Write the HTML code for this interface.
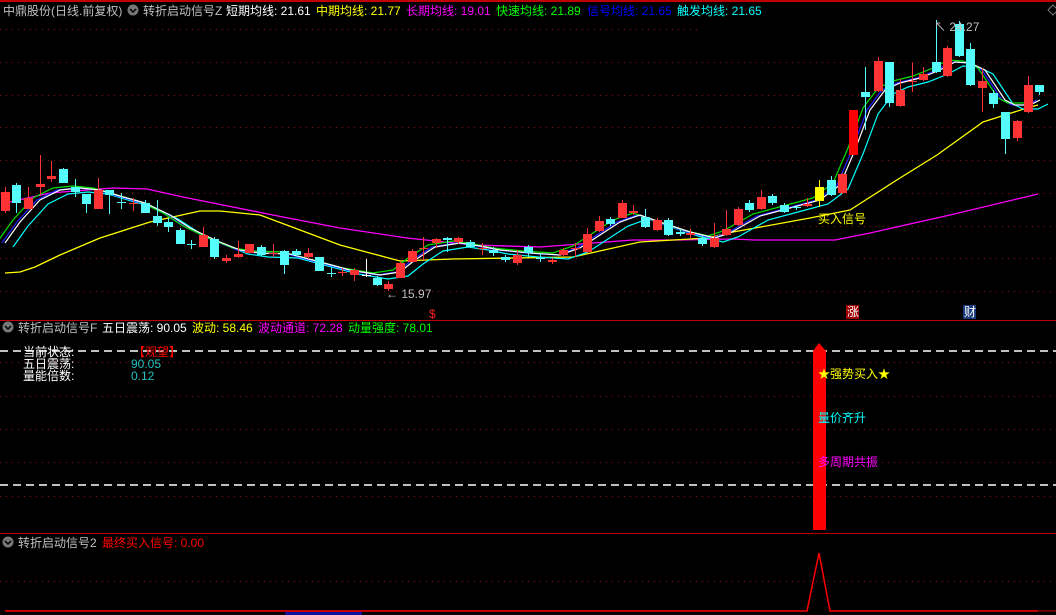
<!DOCTYPE html>
<html><head><meta charset="utf-8"><style>
html,body{margin:0;padding:0;background:#000;width:1056px;height:615px;overflow:hidden}
svg{display:block}
text{font-family:"Liberation Sans","Noto Sans CJK SC",sans-serif;font-size:12px}
</style></head><body>
<svg width="1056" height="615" viewBox="0 0 1056 615" xmlns="http://www.w3.org/2000/svg">
<rect width="1056" height="615" fill="#000"/>
<rect x="0" y="0" width="1056" height="2" fill="#c00000"/>
<g stroke="#8a1010" stroke-width="1" stroke-dasharray="1,5">
<line x1="0" y1="62.5" x2="1056" y2="62.5"/><line x1="0" y1="95.5" x2="1056" y2="95.5"/>
<line x1="0" y1="127.5" x2="1056" y2="127.5"/><line x1="0" y1="160.5" x2="1056" y2="160.5"/>
<line x1="0" y1="193.5" x2="1056" y2="193.5"/><line x1="0" y1="226.5" x2="1056" y2="226.5"/>
<line x1="0" y1="258.5" x2="1056" y2="258.5"/><line x1="0" y1="291.5" x2="1056" y2="291.5"/>
<line x1="0" y1="29.5" x2="700" y2="29.5"/>
<line x1="0" y1="362.5" x2="1056" y2="362.5"/><line x1="0" y1="396.5" x2="1056" y2="396.5"/>
<line x1="0" y1="429.5" x2="1056" y2="429.5"/><line x1="0" y1="462.5" x2="1056" y2="462.5"/>
<line x1="0" y1="496.5" x2="1056" y2="496.5"/><line x1="0" y1="581.5" x2="1056" y2="581.5"/>
</g>
<line x1="0" y1="320.5" x2="1056" y2="320.5" stroke="#c00000"/>
<line x1="0" y1="533.5" x2="1056" y2="533.5" stroke="#c00000"/>
<polyline fill="none" stroke="#ff00ff" stroke-width="1.3" points="5,203 50,193 113,188 147,189 183,197 233,207 283,217 340,228 407,238 473,245 540,247 633,240 680,240 732,239 755,240 835,240 870,233 950,215 1038,194"/>
<polyline fill="none" stroke="#ffff00" stroke-width="1.3" points="5,273 20,272 35,267 60,255 100,238 150,222 200,211 220,211 260,215 300,230 340,245 400,261 453,259 573,257 640,242 707,238 733,232 810,218 850,210 900,178 937,155 983,122 1027,108 1038,105"/>
<g fill="none" stroke-width="1.2">
<polyline stroke="#00ffff" transform="translate(8,4)" points="5,243 20,222 40,200 60,190 80,188 100,190 120,196 145,203 170,215 190,228 215,240 240,250 260,253 290,254 320,262 350,270 380,275 400,272 415,260 435,247 460,243 480,246 500,250 530,253 560,255 580,248 600,235 620,222 640,215 660,222 690,232 715,238 730,233 760,216 790,208 820,200 840,185 855,150 870,110 885,90 900,83 920,78 940,70 955,62 970,63 985,70 995,85 1005,100 1015,105 1030,105 1040,100"/>
<polyline stroke="#2020ff" transform="translate(-3,0)" points="5,243 20,222 40,200 60,190 80,188 100,190 120,196 145,203 170,215 190,228 215,240 240,250 260,253 290,254 320,262 350,270 380,275 400,272 415,260 435,247 460,243 480,246 500,250 530,253 560,255 580,248 600,235 620,222 640,215 660,222 690,232 715,238 730,233 760,216 790,208 820,200 840,185 855,150 870,110 885,90 900,83 920,78 940,70 955,62 970,63 985,70 995,85 1005,100 1015,105 1030,105 1040,100"/>
<polyline stroke="#00e000" transform="translate(-7,-2)" points="5,243 20,222 40,200 60,190 80,188 100,190 120,196 145,203 170,215 190,228 215,240 240,250 260,253 290,254 320,262 350,270 380,275 400,272 415,260 435,247 460,243 480,246 500,250 530,253 560,255 580,248 600,235 620,222 640,215 660,222 690,232 715,238 730,233 760,216 790,208 820,200 840,185 855,150 870,110 885,90 900,83 920,78 940,70 955,62 970,63 985,70 995,85 1005,100 1015,105 1030,105 1040,100"/>
<polyline stroke="#ffffff" points="5,243 20,222 40,200 60,190 80,188 100,190 120,196 145,203 170,215 190,228 215,240 240,250 260,253 290,254 320,262 350,270 380,275 400,272 415,260 435,247 460,243 480,246 500,250 530,253 560,255 580,248 600,235 620,222 640,215 660,222 690,232 715,238 730,233 760,216 790,208 820,200 840,185 855,150 870,110 885,90 900,83 920,78 940,70 955,62 970,63 985,70 995,85 1005,100 1015,105 1030,105 1040,100"/>
</g>
<!-- red candles -->
<path fill="none" stroke="#ff3333" d="M5.5,187V213M28.5,187V209M40.5,155V195M51.5,161V182M98.5,178V209M133.5,198V211M203.5,227V247M226.5,255V263M238.5,241V258M249.5,244V253M273.5,244V257M308.5,248V259M342.5,268V276M354.5,268V281M388.5,281V291M400.5,262V278M412.5,249V262M423.5,237V260M436.5,238V248M458.5,237V244M482.5,243V255M517.5,250V265M552.5,258V264M563.5,248V256M575.5,243V257M587.5,228V253M599.5,216V232M622.5,200V218M633.5,205V215M657.5,218V231M690.5,229V238M714.5,223V248M726.5,210V236M738.5,207V226M761.5,190V210M807.5,198V207M842.5,173V194M878.5,57V92M900.5,79V107M912.5,63V92M923.5,67V81M947.5,46V77M982.5,68V112M1017.5,120V141M1028.5,76V113"/>
<g fill="#ff3333">
<rect x="1" y="192" width="9" height="19"/><rect x="24" y="198" width="9" height="11"/><rect x="36" y="184" width="9" height="3"/><rect x="47" y="176" width="9" height="3"/><rect x="94" y="190" width="9" height="19"/><rect x="129" y="203" width="9" height="1"/><rect x="199" y="235" width="9" height="12"/><rect x="222" y="258" width="9" height="3"/><rect x="234" y="254" width="9" height="3"/><rect x="245" y="244" width="9" height="9"/><rect x="269" y="253" width="9" height="1"/><rect x="304" y="253" width="9" height="4"/><rect x="338" y="272" width="9" height="1"/><rect x="350" y="270" width="9" height="5"/><rect x="384" y="284" width="9" height="5"/><rect x="396" y="263" width="9" height="15"/><rect x="408" y="251" width="9" height="11"/><rect x="419" y="248" width="9" height="1"/><rect x="432" y="239" width="9" height="4"/><rect x="454" y="238" width="9" height="4"/><rect x="478" y="248" width="9" height="1"/><rect x="513" y="255" width="9" height="8"/><rect x="548" y="260" width="9" height="2"/><rect x="559" y="250" width="9" height="5"/><rect x="571" y="248" width="9" height="1"/><rect x="583" y="234" width="9" height="18"/><rect x="595" y="221" width="9" height="10"/><rect x="618" y="203" width="9" height="15"/><rect x="629" y="211" width="9" height="2"/><rect x="653" y="220" width="9" height="10"/><rect x="686" y="233" width="9" height="2"/><rect x="710" y="238" width="9" height="9"/><rect x="722" y="229" width="9" height="6"/><rect x="734" y="209" width="9" height="16"/><rect x="757" y="197" width="9" height="12"/><rect x="803" y="204" width="9" height="2"/><rect x="838" y="174" width="9" height="19"/><rect x="874" y="61" width="9" height="30"/><rect x="896" y="90" width="9" height="16"/><rect x="908" y="81" width="9" height="1"/><rect x="919" y="74" width="9" height="6"/><rect x="943" y="48" width="9" height="28"/><rect x="978" y="81" width="9" height="7"/><rect x="1013" y="121" width="9" height="17"/><rect x="1024" y="85" width="9" height="27"/>
</g>
<!-- cyan candles -->
<path fill="none" stroke="#54fcfc" d="M16.5,183V213M63.5,168V183M75.5,179V197M86.5,194V213M109.5,190V214M121.5,193V209M145.5,200V213M157.5,200V226M168.5,218V232M180.5,228V244M191.5,240V249M214.5,237V259M261.5,245V256M284.5,250V274M296.5,249V256M319.5,257V271M331.5,267V277M377.5,276V286M447.5,237V252M470.5,240V248M493.5,247V256M505.5,255V262M528.5,245V257M540.5,253V262M610.5,217V226M645.5,209V228M668.5,218V236M680.5,230V236M702.5,236V246M749.5,200V212M772.5,194V205M784.5,203V213M796.5,205V210M831.5,176V196M865.5,67V130M889.5,62V107M936.5,20V73M959.5,21V57M970.5,43V86M993.5,90V108M1005.5,112V154M1039.5,85V95"/>
<g fill="#54fcfc">
<rect x="12" y="185" width="9" height="18"/><rect x="59" y="169" width="9" height="14"/><rect x="71" y="187" width="9" height="5"/><rect x="82" y="194" width="9" height="10"/><rect x="105" y="190" width="9" height="5"/><rect x="117" y="202" width="9" height="1"/><rect x="141" y="203" width="9" height="10"/><rect x="153" y="216" width="9" height="7"/><rect x="164" y="222" width="9" height="5"/><rect x="176" y="230" width="9" height="14"/><rect x="187" y="244" width="9" height="1"/><rect x="210" y="239" width="9" height="18"/><rect x="257" y="247" width="9" height="8"/><rect x="280" y="251" width="9" height="14"/><rect x="292" y="251" width="9" height="4"/><rect x="315" y="257" width="9" height="14"/><rect x="327" y="273" width="9" height="1"/><rect x="373" y="278" width="9" height="7"/><rect x="443" y="238" width="9" height="2"/><rect x="466" y="242" width="9" height="5"/><rect x="489" y="250" width="9" height="3"/><rect x="501" y="257" width="9" height="3"/><rect x="524" y="247" width="9" height="6"/><rect x="536" y="258" width="9" height="1"/><rect x="606" y="219" width="9" height="5"/><rect x="641" y="217" width="9" height="10"/><rect x="664" y="220" width="9" height="15"/><rect x="676" y="232" width="9" height="2"/><rect x="698" y="238" width="9" height="6"/><rect x="745" y="203" width="9" height="7"/><rect x="768" y="196" width="9" height="7"/><rect x="780" y="205" width="9" height="7"/><rect x="792" y="207" width="9" height="1"/><rect x="827" y="180" width="9" height="15"/><rect x="861" y="92" width="9" height="5"/><rect x="885" y="62" width="9" height="41"/><rect x="932" y="62" width="9" height="10"/><rect x="955" y="24" width="9" height="32"/><rect x="966" y="49" width="9" height="36"/><rect x="989" y="93" width="9" height="11"/><rect x="1001" y="112" width="9" height="27"/><rect x="1035" y="85" width="9" height="7"/>
</g>
<path fill="none" stroke="#fff" d="M366.5,259V277M362,275.5H371"/>
<path fill="none" stroke="#ffff00" d="M819.5,180V207"/><rect x="815" y="187" width="9" height="14" fill="#ffff00"/>
<rect x="849" y="110" width="9" height="45" fill="#ff0000"/>
<text x="818" y="223" fill="#ffff00">买入信号</text>
<text x="386" y="298" fill="#c0c0c0">← 15.97</text>
<text x="934" y="31" fill="#c0c0c0">↖ 24.27</text>
<text x="429" y="318" fill="#ff2020">$</text>
<rect x="846" y="305" width="13" height="14" fill="#a00000"/><text x="847" y="316" fill="#fff" font-size="11">涨</text>
<rect x="963" y="305" width="13" height="14" fill="#1a3a7a"/><text x="964" y="316" fill="#fff" font-size="11">财</text>
<text x="3" y="15" fill="#c0c0c0">中鼎股份(日线.前复权)</text>
<circle cx="133" cy="10" r="5.5" fill="#777"/><path d="M130,9 l3,3 l3,-3" stroke="#000" stroke-width="1.5" fill="none"/>
<text x="143" y="15" fill="#c0c0c0">转折启动信号Z</text>
<text x="226" y="15" fill="#ffffff">短期均线: 21.61</text>
<text x="316" y="15" fill="#ffff00">中期均线: 21.77</text>
<text x="406" y="15" fill="#ff00ff">长期均线: 19.01</text>
<text x="496" y="15" fill="#00ff00">快速均线: 21.89</text>
<text x="587" y="15" fill="#0000ff">信号均线: 21.65</text>
<text x="677" y="15" fill="#00ffff">触发均线: 21.65</text>
<path d="M1048,10 l5,-5 l5,5 l-5,5z" stroke="#777" fill="none"/>
<circle cx="8" cy="327" r="5.5" fill="#777"/><path d="M5,326 l3,3 l3,-3" stroke="#000" stroke-width="1.5" fill="none"/>
<text x="18" y="332" fill="#c0c0c0">转折启动信号F</text>
<text x="102" y="332" fill="#ffffff">五日震荡: 90.05</text>
<text x="192" y="332" fill="#ffff00">波动: 58.46</text>
<text x="258" y="332" fill="#ff00ff">波动通道: 72.28</text>
<text x="348" y="332" fill="#00ff00">动量强度: 78.01</text>
<g stroke="#ffffff" stroke-width="1.5" stroke-dasharray="8,5"><line x1="0" y1="351" x2="1056" y2="351"/><line x1="0" y1="485" x2="1056" y2="485"/></g>
<text x="23" y="356" fill="#ffffff">当前状态:</text>
<text x="23" y="368" fill="#ffffff">五日震荡:</text>
<text x="23" y="380" fill="#ffffff">量能倍数:</text>
<text x="133" y="356" fill="#ff0000">【观望】</text>
<text x="131" y="368" fill="#20c0c0">90.05</text>
<text x="131" y="380" fill="#20c0c0">0.12</text>
<rect x="813" y="351" width="13" height="179" fill="#ff0000"/>
<path d="M813,351 L819,343 L826,351z" fill="#ff0000"/>
<text x="818" y="378" fill="#ffff00">★强势买入★</text>
<text x="818" y="422" fill="#00ffff">量价齐升</text>
<text x="818" y="466" fill="#ff00ff">多周期共振</text>
<circle cx="8" cy="542" r="5.5" fill="#777"/><path d="M5,541 l3,3 l3,-3" stroke="#000" stroke-width="1.5" fill="none"/>
<text x="18" y="547" fill="#c0c0c0">转折启动信号2</text>
<text x="102" y="547" fill="#ff0000">最终买入信号: 0.00</text>
<polyline fill="none" stroke="#ff0000" stroke-width="1.5" points="5,611 807,611 819,553 830,611 1038,611"/>
<line x1="1038" y1="611" x2="1056" y2="611" stroke="#c00000"/>
<rect x="285" y="612" width="77" height="3" fill="#1010a0"/>
</svg>
</body></html>
